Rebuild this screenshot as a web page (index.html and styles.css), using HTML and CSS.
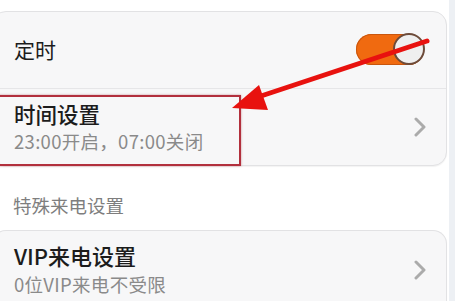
FILE: index.html
```html
<!DOCTYPE html>
<html lang="zh">
<head>
<meta charset="utf-8">
<link rel="stylesheet" href="styles.css">
</head>
<body>
<div class="screen">
  <div class="main">
    <div class="card card-first">
      <div class="row row-toggle">
        <span class="title title-lg">定时</span>
        <div class="switch"><span class="knob"></span></div>
      </div>
      <div class="row row-nav">
        <div class="texts">
          <span class="title">时间设置</span>
          <span class="sub">23:00开启，07:00关闭</span>
        </div>
        <svg class="chev" width="12" height="20" viewBox="0 0 12 20"><polyline points="2,2 10,10 2,18" fill="none" stroke="#ababab" stroke-width="3" stroke-linecap="round" stroke-linejoin="round"/></svg>
      </div>
    </div>
    <div class="section">特殊来电设置</div>
    <div class="card card-second">
      <div class="row row-vip">
        <div class="texts">
          <span class="title title-vip">VIP来电设置</span>
          <span class="sub">0位VIP来电不受限</span>
        </div>
        <svg class="chev chev-vip" width="12" height="20" viewBox="0 0 12 20"><polyline points="2,2 10,10 2,18" fill="none" stroke="#ababab" stroke-width="3" stroke-linecap="round" stroke-linejoin="round"/></svg>
      </div>
    </div>
  </div>
  <div class="strip"></div>
  <div class="highlight"></div>
  <svg class="arrow" width="455" height="301" viewBox="0 0 455 301">
    <line x1="427" y1="41" x2="258" y2="97" stroke="#e8120f" stroke-width="5" stroke-linecap="round"/>
    <polygon points="232,108 259,85 268,110" fill="#e8120f"/>
  </svg>
</div>
</body>
</html>
```

FILE: styles.css
```css
html, body {
  margin: 0;
  padding: 0;
  background: #ffffff;
}
body {
  font-family: "Noto Sans CJK SC", "Noto Sans", sans-serif;
  width: 455px;
  height: 301px;
  overflow: hidden;
}
.screen {
  position: relative;
  display: flex;
  width: 455px;
  height: 301px;
  overflow: hidden;
}
.main {
  width: 449px;
  padding-top: 11px;
  display: flex;
  flex-direction: column;
}
.strip {
  width: 6px;
  background: #edf0f4;
}
.card {
  margin-left: -8px;
  margin-right: 2px;
  background: #f7f7f8;
  border: 1px solid #e2e2e4;
  border-radius: 14px;
  box-shadow: 0 1px 1px rgba(0,0,0,0.05);
}
.card-second {
  border-bottom: none;
  border-radius: 14px 14px 0 0;
  flex: 1;
}
.row {
  display: flex;
  align-items: center;
  justify-content: space-between;
  padding-left: 21px;
  padding-right: 20px;
}
.row-toggle {
  height: 76px;
  border-bottom: 1px solid #e6e6e8;
  padding-right: 22px;
}
.row-nav {
  height: 76px;
}
.row-vip {
  align-items: flex-start;
  padding-top: 9px;
}
.texts {
  display: flex;
  flex-direction: column;
}
.title {
  font-size: 21.5px;
  line-height: 28px;
  color: #1c1c1c;
  font-weight: 500;
}
.title-lg {
  font-size: 21px;
  font-weight: 400;
  padding-bottom: 2px;
}
.title-vip {
  font-size: 22px;
  line-height: 31px;
}
.sub {
  font-size: 18.5px;
  line-height: 27px;
  color: #8a8a8a;
  letter-spacing: 0.3px;
}
.section {
  height: 64px;
  box-sizing: border-box;
  padding-left: 13px;
  padding-top: 26px;
  font-size: 18.5px;
  line-height: 26px;
  color: #7e7e7e;
}
.switch {
  position: relative;
  width: 68px;
  height: 31px;
  border-radius: 16px;
  background: #f06a10;
  box-shadow: inset 0 0 0 1px #c9560e;
  margin-top: -1px;
}
.knob {
  position: absolute;
  right: -1px;
  top: 0px;
  width: 28px;
  height: 28px;
  border-radius: 50%;
  background: #efefef;
  border: 2px solid #6d4b3a;
  margin-top: -1px;
}
.chev {
  display: block;
}
.chev-vip {
  margin-top: 20px;
}
.highlight {
  position: absolute;
  left: -2px;
  top: 95px;
  width: 239px;
  height: 67px;
  border: 2px solid #b2303d;
  box-shadow: 0 0 2px rgba(160,40,50,0.5);
}
.arrow {
  position: absolute;
  left: 0;
  top: 0;
  pointer-events: none;
}
```
